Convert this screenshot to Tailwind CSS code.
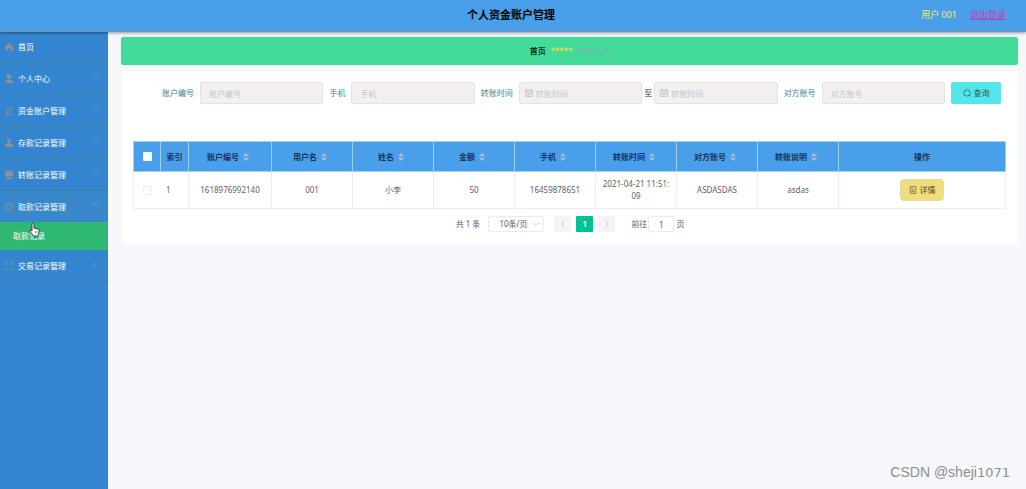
<!DOCTYPE html>
<html lang="zh-CN">
<head>
<meta charset="utf-8">
<meta name="viewport" content="width=device-width, initial-scale=1">
<title>个人资金账户管理</title>
<script src="https://cdn.jsdelivr.net/npm/@tailwindcss/browser@4"></script>
</head>
<body class="relative flex min-h-screen flex-col bg-[#f6f8fc] font-['Noto_Sans','Noto_Sans_CJK_SC',sans-serif] text-[8px] leading-3 text-[#606266]">
<svg class="hidden" aria-hidden="true">
  <symbol id="down" viewBox="0 0 10 10"><path d="M2 3.5 5 6.5 8 3.5" fill="none" stroke="currentColor" stroke-width=".9"/></symbol>
  <symbol id="sort" viewBox="0 0 6 8"><path d="M3 0 6 3.3H0ZM3 8 0 4.7H6Z" fill="currentColor"/></symbol>
  <symbol id="person" viewBox="0 0 10 10"><circle cx="5" cy="3" r="2.4" fill="currentColor"/><path d="M1 9V7.500Q1 6 3 6H7Q9 6 9 7.500V9Z" fill="currentColor"/></symbol>
  <symbol id="date" viewBox="0 0 10 10"><path d="M1.500 2H8.500V8.500H1.500ZM1.500 4H8.500M3 1V2.500M7 1V2.500M3 5.500H7M3 7H7" fill="none" stroke="currentColor" stroke-width=".7"/></symbol>
</svg>

<header class="z-10 grid h-8 shrink-0 grid-cols-3 items-center border-b border-[#7d93ad] bg-[#4a9fea] pb-px shadow-[0_1px_3px_#00000066]">
  <h1 class="col-start-2 pr-1 text-center text-[11px] leading-4 font-bold text-black">个人资金账户管理</h1>
  <div class="flex justify-end gap-[13px] pr-5 text-[9px]">
    <span class="text-[#f5f05a]">用户 001</span>
    <a href="#" class="text-[#c93ba8] underline">退出登录</a>
  </div>
</header>

<div class="flex flex-1">
  <nav class="-mt-px w-[108px] shrink-0 bg-[#3385cf] text-white">
    <a href="#" class="flex h-8 items-center gap-1 border-b border-[#3a7f9c] pl-1">
      <svg class="size-[10px] text-[#8f8f98]" viewBox="0 0 10 10"><path d="M5 1 9.500 5 8.800 5.600V9H6.300V6.300H3.700V9H1.200V5.600L.5 5Z" fill="currentColor"/></svg>
      <span>首页</span></a>
    <a href="#" class="flex h-8 items-center gap-1 border-b border-[#3a7f9c] pr-2 pl-1">
      <svg class="size-[10px] text-[#8f8f98]"><use href="#person"/></svg>
      <span class="flex-1">个人中心</span><svg class="mb-1 size-[10px] text-[#6b9cc6]"><use href="#down"/></svg></a>
    <a href="#" class="flex h-8 items-center gap-1 border-b border-[#3a7f9c] pr-2 pl-1">
      <svg class="size-[10px] text-[#8f8f98]" viewBox="0 0 10 10"><path d="M1.500 8H8.500M2.500 8V4Q2.500 1.500 5 1.500T7.500 4V8M4 9.300H6M1 9.300 9 .7" fill="none" stroke="currentColor" stroke-width=".8"/></svg>
      <span class="flex-1">资金账户管理</span><svg class="mb-1 size-[10px] text-[#6b9cc6]"><use href="#down"/></svg></a>
    <a href="#" class="flex h-8 items-center gap-1 border-b border-[#3a7f9c] pr-2 pl-1">
      <svg class="size-[10px] text-[#8f8f98]" viewBox="0 0 10 10"><path d="M3.200 1H6.800V4L6 6H9V9H1V6H4L3.200 4Z" fill="currentColor"/></svg>
      <span class="flex-1">存款记录管理</span><svg class="mb-1 size-[10px] text-[#6b9cc6]"><use href="#down"/></svg></a>
    <a href="#" class="flex h-8 items-center gap-1 border-b border-[#3a7f9c] pr-2 pl-1">
      <svg class="size-[10px] text-[#8f8f98]" viewBox="0 0 10 10"><path d="M1.500 1H8.500V3H9V6.500H1V3H1.500ZM2 7.200H8V9H2Z" fill="currentColor"/></svg>
      <span class="flex-1">转账记录管理</span><svg class="mb-1 size-[10px] text-[#6b9cc6]"><use href="#down"/></svg></a>
    <a href="#" class="flex h-[31px] items-center gap-1 bg-[#3a88cc] pr-2 pl-1">
      <svg class="size-[10px] text-[#8f8f98]" viewBox="0 0 10 10"><g fill="none" stroke="currentColor" stroke-width=".6"><circle cx="5" cy="5" r="4.300"/><circle cx="5" cy="5" r="2.300"/><path d="M3.500 1V3.200M6.500 1V3.200M3.500 9V6.800M6.500 9V6.800M1 3.500H3M9 3.500H7M1 6.500H3M9 6.500H7"/></g></svg>
      <span class="flex-1">取款记录管理</span><svg class="mb-1 size-[10px] rotate-180 text-[#6b9cc6]"><use href="#down"/></svg></a>
    <a href="#" class="relative flex h-7 items-center bg-[#2eb872] pl-[13px]">取款记录
      <svg class="absolute top-0 left-[29px] h-[15px] w-[11px]" viewBox="0 0 11 15"><path d="M3 9V2Q3 .8 4 .8T5 2V6L9 7Q10.300 7.300 10.200 8.500L9.800 12Q9.500 14 8 14H5.500Q4.500 14 3.800 12.800L1 9.200Q.6 8 1.800 8Z" fill="#fff" stroke="#333" stroke-width=".9"/><path d="M6.500 9V11.500M8.200 9V11.500" stroke="#333" stroke-width=".5"/></svg></a>
    <a href="#" class="flex h-8 items-center gap-1 border-b border-[#3a7f9c] pr-2 pl-1">
      <svg class="size-[10px] text-[#8f8f98]" viewBox="0 0 10 10"><path d="M1 3.500V1H3.500M6.500 1H9V3.500M9 6.500V9H6.500M3.500 9H1V6.500" fill="none" stroke="currentColor" stroke-width=".9"/></svg>
      <span class="flex-1">交易记录管理</span><svg class="mb-1 size-[10px] text-[#6b9cc6]"><use href="#down"/></svg></a>
  </nav>

  <main class="min-w-0 flex-1 pt-[5px] pr-2 pl-[13px]">
    <div class="flex h-7 items-center justify-center gap-[5px] rounded-[3px] bg-[#42db99] shadow-[0_0_1px_#42db99]">
      <a href="#" class="font-bold text-[#162c25]">首页</a>
      <span class="font-bold text-[#e6dc55]">*****</span>
      <span class="text-[#7ab5b0]">转账记录</span>
    </div>

    <section class="mt-[6px] ml-px bg-white pb-[11px]">
      <form class="flex items-center pt-[11px] pr-[17px] pl-10 text-[#3c8589]">
        <label for="acc" class="shrink-0">账户编号</label>
        <div class="ml-[6px] flex flex-1"><input id="acc" placeholder="账户编号" class="h-[22px] w-full min-w-0 rounded-[2px] border border-[#e4e2e6] bg-[#f5f0f0] px-2 placeholder:text-[#c0c4cc]"></div>
        <label for="tel" class="ml-[6px] shrink-0">手机</label>
        <div class="ml-[6px] flex flex-1"><input id="tel" placeholder="手机" class="h-[22px] w-full min-w-0 rounded-[2px] border border-[#e4e2e6] bg-[#f5f0f0] px-2 placeholder:text-[#c0c4cc]"></div>
        <label for="from" class="ml-[6px] shrink-0">转账时间</label>
        <div class="relative ml-[6px] flex flex-1"><input id="from" placeholder="转账时间" class="h-[22px] w-full min-w-0 rounded-[2px] border border-[#e4e2e6] bg-[#f5f0f0] pr-2 pl-4 placeholder:text-[#c0c4cc]"><svg class="absolute top-[6px] left-[5px] size-[10px] text-[#b5b8c2]"><use href="#date"/></svg></div>
        <label for="to" class="mx-[2px] shrink-0 text-[#303133]">至</label>
        <div class="relative flex flex-1"><input id="to" placeholder="转账时间" class="h-[22px] w-full min-w-0 rounded-[2px] border border-[#e4e2e6] bg-[#f5f0f0] pr-2 pl-4 placeholder:text-[#c0c4cc]"><svg class="absolute top-[6px] left-[5px] size-[10px] text-[#b5b8c2]"><use href="#date"/></svg></div>
        <label for="peer" class="ml-[6px] shrink-0">对方账号</label>
        <div class="ml-[6px] flex flex-1"><input id="peer" placeholder="对方账号" class="h-[22px] w-full min-w-0 rounded-[2px] border border-[#e4e2e6] bg-[#f5f0f0] px-2 placeholder:text-[#c0c4cc]"></div>
        <button type="button" class="ml-[6px] flex h-[22px] w-[50px] shrink-0 items-center justify-center gap-[3px] rounded-[2px] bg-[#55e6ec] text-[#26565c]">
          <svg class="size-2" viewBox="0 0 8 8"><path d="M6 6 7.500 7.500" stroke="currentColor" stroke-width=".7"/><circle cx="4" cy="4" r="3.200" fill="none" stroke="currentColor" stroke-width=".7"/></svg>查询</button>
      </form>

      <div class="mt-[37px] mr-3 ml-[11px]">
        <table class="w-full table-fixed border-collapse text-center">
          <colgroup><col class="w-[27px]"><col class="w-[28px]"><col class="w-[83px]"><col class="w-[81px]"><col class="w-[81px]"><col class="w-[81px]"><col class="w-[81px]"><col class="w-[81px]"><col class="w-[81px]"><col class="w-[81px]"><col></colgroup>
          <thead class="bg-[#4a9fea] text-[#17345c]">
            <tr class="h-[30px]">
              <th class="border border-[#9fd0f5]"><input type="checkbox" aria-label="全选" class="mx-auto block size-[9px] appearance-none rounded-[1px] bg-white"></th>
              <th class="border border-[#9fd0f5]">索引</th>
              <th class="border border-[#9fd0f5]"><span class="flex items-center justify-center gap-1 pr-1">账户编号<svg class="h-2 w-[6px] text-[#b4bcc9]"><use href="#sort"/></svg></span></th>
              <th class="border border-[#9fd0f5]"><span class="flex items-center justify-center gap-1 pr-1">用户名<svg class="h-2 w-[6px] text-[#b4bcc9]"><use href="#sort"/></svg></span></th>
              <th class="border border-[#9fd0f5]"><span class="flex items-center justify-center gap-1 pr-1">姓名<svg class="h-2 w-[6px] text-[#b4bcc9]"><use href="#sort"/></svg></span></th>
              <th class="border border-[#9fd0f5]"><span class="flex items-center justify-center gap-1 pr-1">金额<svg class="h-2 w-[6px] text-[#b4bcc9]"><use href="#sort"/></svg></span></th>
              <th class="border border-[#9fd0f5]"><span class="flex items-center justify-center gap-1 pr-1">手机<svg class="h-2 w-[6px] text-[#b4bcc9]"><use href="#sort"/></svg></span></th>
              <th class="border border-[#9fd0f5]"><span class="flex items-center justify-center gap-1 pr-1">转账时间<svg class="h-2 w-[6px] text-[#b4bcc9]"><use href="#sort"/></svg></span></th>
              <th class="border border-[#9fd0f5]"><span class="flex items-center justify-center gap-1 pr-1">对方账号<svg class="h-2 w-[6px] text-[#b4bcc9]"><use href="#sort"/></svg></span></th>
              <th class="border border-[#9fd0f5]"><span class="flex items-center justify-center gap-1 pr-1">转账说明<svg class="h-2 w-[6px] text-[#b4bcc9]"><use href="#sort"/></svg></span></th>
              <th class="border border-[#9fd0f5]">操作</th>
            </tr>
          </thead>
          <tbody>
            <tr class="h-[37px]">
              <td class="border-b border-l border-[#ebeef5]"><input type="checkbox" aria-label="选择第1行" class="mx-auto block size-[9px] appearance-none rounded-[2px] border border-[#eceef2] bg-white"></td>
              <td class="border-b border-[#ebeef5] pr-3">1</td>
              <td class="border border-[#ebeef5]">1618976992140</td>
              <td class="border border-[#ebeef5]">001</td>
              <td class="border border-[#ebeef5]">小李</td>
              <td class="border border-[#ebeef5]">50</td>
              <td class="border border-[#ebeef5]">16459878651</td>
              <td class="border border-[#ebeef5] px-[5px] break-all">2021-04-21 11:51:09</td>
              <td class="border border-[#ebeef5]">ASDASDAS</td>
              <td class="border border-[#ebeef5]">asdas</td>
              <td class="border border-[#ebeef5]"><button type="button" class="mx-auto flex h-[22px] w-11 items-center justify-center gap-[3px] rounded-[4px] border border-[#e6dca0] bg-[#f0dd7d] text-[#4d4726]"><svg class="size-2" viewBox="0 0 8 8"><path d="M1.200.6H6.800V7.400H1.200ZM2.500 2.500H4M2.500 4H5.500M2.500 5.600H5.500" fill="none" stroke="currentColor" stroke-width=".6"/></svg>详情</button></td>
            </tr>
          </tbody>
        </table>
      </div>

      <div class="mt-[7px] flex h-4 items-center justify-center">
        <span>共 1 条</span>
        <div class="relative ml-2 flex"><select aria-label="每页条数" class="h-4 w-[56px] appearance-none rounded-[2px] border border-[#e9ebf0] bg-white pl-[10px]"><option>10条/页</option></select><svg class="pointer-events-none absolute top-[3px] right-[3px] size-[10px] text-[#c0c4cc]"><use href="#down"/></svg></div>
        <button type="button" aria-label="上一页" class="ml-[10px] flex h-4 w-[17px] items-center justify-center rounded-[1px] bg-[#f4f4f5] text-[#b5b9c2]"><svg class="size-[10px] rotate-90"><use href="#down"/></svg></button>
        <button type="button" class="ml-[5px] h-4 w-[17px] rounded-[1px] bg-[#00c292] font-bold text-white">1</button>
        <button type="button" aria-label="下一页" class="ml-[5px] flex h-4 w-[17px] items-center justify-center rounded-[1px] bg-[#f4f4f5] text-[#b5b9c2]"><svg class="size-[10px] -rotate-90"><use href="#down"/></svg></button>
        <label for="page" class="ml-4">前往</label>
        <input id="page" value="1" class="ml-px h-4 w-[26px] rounded-[2px] border border-[#e9ebf0] bg-white text-center">
        <span class="ml-[2px]">页</span>
      </div>
    </section>
  </main>
</div>
<p class="absolute right-4 bottom-[6px] font-['Liberation_Sans',sans-serif] text-sm text-[#8c8d90]">CSDN @sheji<span class="font-['DejaVu_Sans',sans-serif] text-[13px]">1071</span></p>
</body>
</html>
